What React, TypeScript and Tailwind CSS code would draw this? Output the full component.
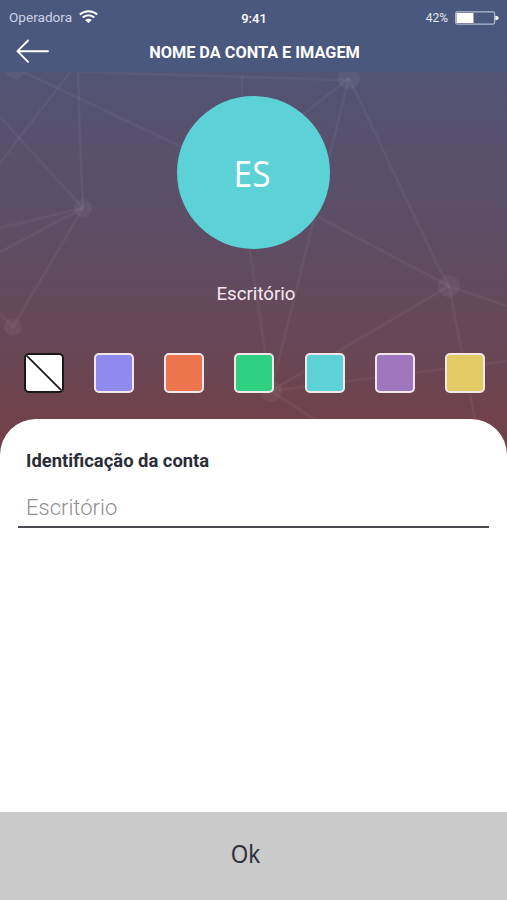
import { useState } from 'react';

interface Swatch {
  id: string;
  label: string;
  className: string;
}

const swatches: Swatch[] = [
  { id: 'lilac', label: 'Lilás', className: 'bg-[#9089ee]' },
  { id: 'orange', label: 'Laranja', className: 'bg-[#ec754e]' },
  { id: 'green', label: 'Verde', className: 'bg-[#30d083]' },
  { id: 'aqua', label: 'Turquesa', className: 'bg-[#5cd2d6]' },
  { id: 'purple', label: 'Roxo', className: 'bg-[#9f77bf]' },
  { id: 'yellow', label: 'Amarelo', className: 'bg-[#e3cb63]' },
];

function StatusBar() {
  return (
    <div className="grid h-9 grid-cols-3 items-center pl-[9px] pr-2 text-white">
      <div className="flex items-center gap-[7px]">
        <span className="text-[13.6px] leading-none text-[#cfd3e6]">Operadora</span>
        <svg className="-mt-[3px]" width="19" height="13" viewBox="0 0 19 13" fill="none" stroke="#fff" strokeWidth="2">
          <path d="M0.8 4.6C5.8 0 13.2 0 18.2 4.6" />
          <path d="M3.7 7.5C7.1 4.4 11.9 4.4 15.3 7.5" />
          <path d="M6.2 10.1Q9.5 7.3 12.8 10.1L9.5 12.9Z" fill="#fff" stroke="none" />
        </svg>
      </div>
      <span className="text-center text-[13px] font-medium leading-none">9:41</span>
      <div className="flex items-center justify-end gap-[7px]">
        <span className="text-[12px] leading-none text-[#e4e6f0]">42%</span>
        <svg width="44" height="14" viewBox="0 0 44 14">
          <rect x="0.6" y="0.9" width="39" height="12.2" rx="1.5" fill="none" stroke="#b3b9d0" strokeWidth="1.1" />
          <rect x="1.5" y="2" width="17" height="10" fill="#fff" />
          <path d="M40.3 4.8Q43.6 5 43.6 7T40.3 9.2Z" fill="#fff" />
        </svg>
      </div>
    </div>
  );
}

// Faint constellation behind the avatar
function NetworkPattern() {
  return (
    <svg className="absolute inset-0" width="507" height="400" viewBox="0 72 507 400">
      <g fill="none" stroke="#fff" strokeOpacity="0.045" strokeWidth="2.8">
        <path d="M15 68L184 148" />
        <path d="M70 72L0 163" />
        <path d="M78 72L80 140L83 208" />
        <path d="M0 117L83 208" />
        <path d="M83 208L0 228" />
        <path d="M83 208L0 252" />
        <path d="M83 208L13 327L0 314" />
        <path d="M78 72L349 80" />
        <path d="M242 76V110" />
        <path d="M349 78L300 117" />
        <path d="M349 78L271 391" />
        <path d="M349 78L437 264L449 286" />
        <path d="M248 238L271 391" />
        <path d="M318 217L449 286L507 306" />
        <path d="M449 286L271 391" />
        <path d="M449 286L475 420" />
        <path d="M271 391L507 361" />
        <path d="M271 391L320 423" />
      </g>
      <g fill="#fff" fillOpacity="0.05">
        <circle cx="15" cy="70" r="9" />
        <circle cx="83" cy="208" r="9" />
        <circle cx="13" cy="327" r="9" />
        <circle cx="349" cy="78" r="11" />
        <circle cx="449" cy="286" r="11" />
        <circle cx="271" cy="391" r="11" />
      </g>
    </svg>
  );
}

export default function App() {
  const [name, setName] = useState('');

  return (
    <div className="flex h-[900px] w-[507px] flex-col overflow-hidden bg-white font-['Roboto',sans-serif]">
      <header className="h-[72px] shrink-0 bg-[#4b587e]">
        <StatusBar />
        <div className="grid h-8 grid-cols-[90px_1fr_90px] items-center">
          <button aria-label="Voltar" className="-mt-[3px] pl-4">
            <svg width="34" height="24" viewBox="0 0 34 24" fill="none" stroke="#fff" strokeWidth="1.9" strokeLinecap="round" strokeLinejoin="round">
              <path d="M32 12.2H1.5M12 1.5L1.5 12.2L12 22.8" />
            </svg>
          </button>
          <h1 className="whitespace-nowrap pl-0.5 pt-0.5 text-center text-[16.3px] font-bold leading-none text-white">
            NOME DA CONTA E IMAGEM
          </h1>
        </div>
      </header>

      <section className="relative h-[400px] shrink-0 bg-linear-to-b from-[#525375] via-[#5f4c62] via-45% to-[#743e45]">
        <NetworkPattern />
        <div className="relative flex flex-col items-center pt-6">
          <div className="flex size-[153px] items-center justify-center rounded-full bg-[#5cd2d6]">
            <span className="scale-x-[0.93] pr-1 pt-0.5 font-['Open_Sans',sans-serif] text-[36px] leading-none text-white">
              ES
            </span>
          </div>
          <p className="mt-[34px] pl-[5px] text-[18.7px] leading-[23px] text-[#f5e9ef]">Escritório</p>
        </div>
        <div className="relative mt-[47px] flex justify-between pl-6 pr-[22px]">
          <button aria-label="Sem cor" className="size-10 overflow-hidden rounded-[5px] border-2 border-[#1b1818] bg-white">
            <svg className="size-full" viewBox="0 0 36 36">
              <path d="M0 0L36 36" stroke="#1b1818" strokeWidth="1.8" />
            </svg>
          </button>
          {swatches.map((s) => (
            <button
              key={s.id}
              aria-label={s.label}
              className={`size-10 rounded-[5px] border-2 border-[#f3e6ea] ${s.className}`}
            />
          ))}
        </div>
      </section>

      <main className="relative -mt-[53px] flex-1 rounded-t-[36px] bg-white px-[18px] pt-[31px]">
        <label htmlFor="account" className="block pl-2 text-[18.4px] font-bold leading-[22px] text-[#2a2c38]">
          Identificação da conta
        </label>
        <input
          id="account"
          value={name}
          onChange={(e) => setName(e.target.value)}
          placeholder="Escritório"
          className="mt-[14px] block h-[42px] w-full border-b-2 border-[#4b4b51] px-2 pt-0.5 text-[22px] font-light outline-none placeholder:text-[#8f8f8f]"
        />
      </main>

      <button className="h-[88px] shrink-0 bg-[#cacaca] pb-1.5 pr-4 font-['Noto_Sans',sans-serif] text-[25px] leading-none text-[#30303c]">
        <span className="inline-block scale-x-90">Ok</span>
      </button>
    </div>
  );
}
